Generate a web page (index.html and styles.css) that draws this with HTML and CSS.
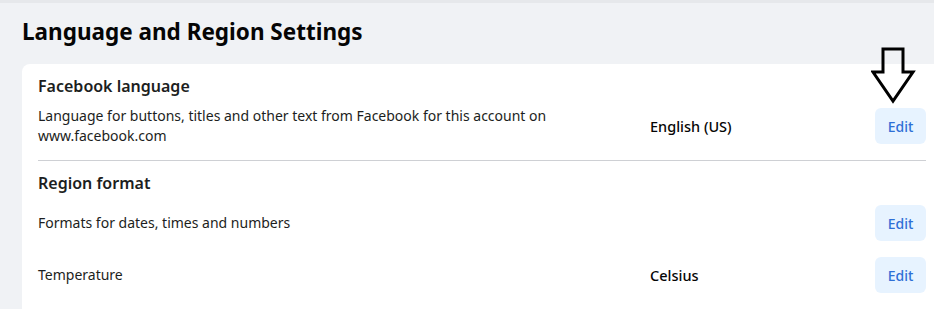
FILE: index.html
```html
<!DOCTYPE html>
<html lang="en">
<head>
<meta charset="UTF-8">
<meta name="viewport" content="width=device-width, initial-scale=1.0">
<title>Language and Region Settings</title>
<link rel="stylesheet" href="styles.css">
</head>
<body>

<div class="settings-page">
  <h1 class="settings-title">Language and Region Settings</h1>

  <div class="settings-card">
    <!-- Facebook language -->
    <div class="settings-section">
      <div class="section-heading">Facebook language</div>
      <div class="setting-row">
        <div class="setting-label">Language for buttons, titles and other text from Facebook for this account on www.facebook.com</div>
        <div class="setting-value">English (US)</div>
        <button class="edit-btn">Edit</button>
      </div>
    </div>

    <!-- Region format -->
    <div class="settings-section">
      <div class="section-heading">Region format</div>
      <div class="setting-row">
        <div class="setting-label">Formats for dates, times and numbers</div>
        <div class="setting-value"></div>
        <button class="edit-btn">Edit</button>
      </div>
      <div class="setting-row">
        <div class="setting-label">Temperature</div>
        <div class="setting-value">Celsius</div>
        <button class="edit-btn">Edit</button>
      </div>
    </div>
  </div>

  <!-- annotation arrow -->
  <svg class="hint-arrow" width="46" height="60" viewBox="0 0 46 60">
    <polygon points="12,3 32,3 32,26 42,26 22,55 2,26 12,26" fill="none" stroke="#000" stroke-width="3" stroke-linejoin="miter"/>
  </svg>
</div>

</body>
</html>
```

FILE: styles.css
```css
html, body {
  margin: 0;
  padding: 0;
}

body {
  background: #F0F2F5;
  border-top: 3px solid #E6E8EB;
  font-family: 'Noto Sans', 'Open Sans', sans-serif;
  color: #050505;
  overflow: hidden;
}

.settings-page {
  position: relative;
  padding: 0 0 0 22px;
}

.settings-title {
  margin: 0;
  padding: 15px 0 0 0;
  height: 61px;
  box-sizing: border-box;
  font-size: 22.5px;
  font-weight: 700;
  line-height: 28px;
}

/* Card */
.settings-card {
  background: #FFFFFF;
  border-radius: 8px;
  margin-right: -8px;
  padding: 0 16px;
}

.settings-section {
  padding: 12px 0 8px 0;
}

.settings-section + .settings-section {
  border-top: 1px solid #CED0D4;
  padding-bottom: 16px;
}

.section-heading {
  font-size: 16px;
  font-weight: 600;
  line-height: 20px;
  margin-bottom: 4px;
  color: #1C1E21;
}

.setting-row {
  display: grid;
  grid-template-columns: 612px 1fr auto;
  align-items: center;
  height: 52px;
}

.setting-label {
  font-size: 14px;
  line-height: 20px;
  max-width: 530px;
  color: #1C1E21;
}

.setting-value {
  font-size: 14.5px;
  font-weight: 500;
}

.edit-btn {
  width: 51px;
  height: 36px;
  border: none;
  border-radius: 6px;
  background: #E7F3FF;
  color: #2F6FD6;
  font-family: inherit;
  font-size: 14px;
  font-weight: 500;
  cursor: pointer;
}

/* Annotation arrow over the first edit button */
.hint-arrow {
  position: absolute;
  left: 871px;
  top: 43px;
}
```
